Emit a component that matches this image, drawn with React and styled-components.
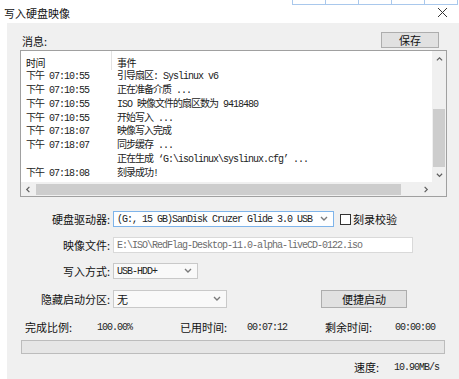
import styled, { createGlobalStyle } from "styled-components";

const GlobalStyle = createGlobalStyle`
  html, body {
    margin: 0;
    padding: 0;
    background: #fff;
  }
  body {
    font-family: "Noto Sans CJK SC", "Noto Sans", sans-serif;
    color: #111;
  }
`;

const logRows = [
  ["下午 07:10:55", "引导扇区: Syslinux v6"],
  ["下午 07:10:55", "正在准备介质 ..."],
  ["下午 07:10:55", "ISO 映像文件的扇区数为 9418480"],
  ["下午 07:10:55", "开始写入 ..."],
  ["下午 07:18:07", "映像写入完成"],
  ["下午 07:18:07", "同步缓存 ..."],
  ["", "正在生成 ‘G:\\isolinux\\syslinux.cfg’ ..."],
  ["下午 07:18:08", "刻录成功!"],
];

const Chevron = ({ dir = "down", color = "#606060", size = 7 }) => {
  const paths = {
    down: "M1 2 L4 5 L7 2",
    up: "M1 5 L4 2 L7 5",
    left: "M5 1 L2 4 L5 7",
    right: "M3 1 L6 4 L3 7",
  };
  return (
    <svg width={size} height={size} viewBox="0 0 8 8">
      <path d={paths[dir]} fill="none" stroke={color} strokeWidth="1.4" />
    </svg>
  );
};

const App = () => {
  return (
    <>
      <GlobalStyle />
      <Window>
        <TabStrip>
          {[0, 1, 2, 3, 4].map((i) => (
            <TabCell key={i} />
          ))}
        </TabStrip>
        <TitleBar>
          <Title>写入硬盘映像</Title>
          <svg width="11" height="11" viewBox="0 0 11 11">
            <path d="M1 1 L10 10 M10 1 L1 10" stroke="#333" strokeWidth="1" />
          </svg>
        </TitleBar>
        <Body>
          <TopRow>
            <Caption>消息:</Caption>
            <Button $width={58} $height={16}>保存</Button>
          </TopRow>
          <ListBox>
            <ListContent>
              <HeaderRow>
                <HeaderCell $divider>时间</HeaderCell>
                <HeaderCell>事件</HeaderCell>
              </HeaderRow>
              {logRows.map(([time, event], i) => (
                <LogRow key={i}>
                  <LogCell>{time}</LogCell>
                  <LogCell>{event}</LogCell>
                </LogRow>
              ))}
            </ListContent>
            <VScroll>
              <ArrowBox $h={17}>
                <Chevron dir="up" />
              </ArrowBox>
              <VThumb $offset={41} $size={58} />
              <Spacer />
              <ArrowBox $h={14}>
                <Chevron dir="down" />
              </ArrowBox>
            </VScroll>
            <HScroll>
              <ArrowBox $w={15}>
                <Chevron dir="left" />
              </ArrowBox>
              <HThumb $size={365} />
              <Spacer />
              <ArrowBox $w={14}>
                <Chevron dir="right" />
              </ArrowBox>
            </HScroll>
            <Corner />
          </ListBox>

          <FormRow $gap={14}>
            <Label>硬盘驱动器:</Label>
            <Combo $width={221} $focus>
              <ComboText>(G:, 15 GB)SanDisk Cruzer Glide 3.0 USB</ComboText>
              <Chevron dir="down" color="#7a7a7a" size={8} />
            </Combo>
            <Check />
            <CheckLabel>刻录校验</CheckLabel>
          </FormRow>

          <FormRow $gap={10}>
            <Label>映像文件:</Label>
            <TextField>E:\ISO\RedFlag-Desktop-11.0-alpha-liveCD-0122.iso</TextField>
          </FormRow>

          <FormRow $gap={10}>
            <Label>写入方式:</Label>
            <Combo $width={85}>
              <ComboText>USB-HDD+</ComboText>
              <Chevron dir="down" color="#7a7a7a" size={8} />
            </Combo>
          </FormRow>

          <FormRow $gap={11} $height={18}>
            <Label>隐藏启动分区:</Label>
            <Combo $width={114}>
              <ComboCjk>无</ComboCjk>
              <Chevron dir="down" color="#7a7a7a" size={8} />
            </Combo>
            <Button $width={86} $height={18} $left={94}>
              便捷启动
            </Button>
          </FormRow>

          <Stats>
            <StatLabel>完成比例:</StatLabel>
            <StatValue>100.00%</StatValue>
            <StatLabel>已用时间:</StatLabel>
            <StatValue>00:07:12</StatValue>
            <StatLabel>剩余时间:</StatLabel>
            <StatValue>00:00:00</StatValue>
          </Stats>

          <Progress />

          <SpeedRow>
            <StatLabel>速度:</StatLabel>
            <StatValue>10.90MB/s</StatValue>
          </SpeedRow>
        </Body>
      </Window>
    </>
  );
};

const Window = styled.div`
  position: relative;
  width: 459px;
  height: 379px;
  display: flex;
  flex-direction: column;
  background: #fff;
  overflow: hidden;
`;

const TabStrip = styled.div`
  position: absolute;
  top: -1px;
  left: 292px;
  display: flex;
`;

const TabCell = styled.div`
  width: 32px;
  height: 4px;
  border: 1px solid #a9c8ec;
  border-left-width: ${(p) => (p.first ? 1 : 0)}px;
  &:first-child {
    border-left-width: 1px;
  }
`;

const TitleBar = styled.div`
  height: 23px;
  flex-shrink: 0;
  display: flex;
  align-items: center;
  justify-content: space-between;
  padding: 2px 11px 0 4px;
  box-sizing: border-box;
`;

const Title = styled.span`
  font-size: 11px;
  color: #111;
`;

const Body = styled.div`
  flex: 1;
  margin-left: 7px;
  background: #f0f0f0;
  display: flex;
  flex-direction: column;
`;

const TopRow = styled.div`
  display: flex;
  justify-content: space-between;
  align-items: flex-end;
  padding: 9px 20px 0 15px;
`;

const Caption = styled.span`
  font-size: 11px;
  line-height: 14px;
`;

const Button = styled.div`
  width: ${(p) => p.$width}px;
  height: ${(p) => p.$height}px;
  margin-left: ${(p) => p.$left || 0}px;
  box-sizing: border-box;
  background: #e1e1e1;
  border: 1px solid #adadad;
  display: flex;
  align-items: center;
  justify-content: center;
  font-size: 11px;
  color: #111;
`;

const ListBox = styled.div`
  margin: 2px 12px 0 13px;
  height: 147px;
  box-sizing: border-box;
  border: 1px solid #a0a0a0;
  background: #fff;
  display: grid;
  grid-template-columns: 1fr 14px;
  grid-template-rows: 1fr 14px;
  overflow: hidden;
`;

const ListContent = styled.div`
  overflow: hidden;
  font-family: "Liberation Mono", "Noto Sans CJK SC", monospace;
  font-size: 10px;
  letter-spacing: -1px;
  color: #222;
`;

const HeaderRow = styled.div`
  display: grid;
  grid-template-columns: 91px 1fr;
  height: 19px;
`;

const HeaderCell = styled.div`
  padding: 5px 0 0 5px;
  font-family: "Noto Sans CJK SC", sans-serif;
  font-size: 10px;
  line-height: 13px;
  letter-spacing: -0.5px;
  color: #111;
  border-right: ${(p) => (p.$divider ? "1px solid #e3e3e3" : "none")};
`;

const LogRow = styled.div`
  display: grid;
  grid-template-columns: 91px 1fr;
  height: 13.75px;
  align-items: center;
`;

const LogCell = styled.div`
  padding-left: 5px;
  white-space: pre;
  line-height: 13px;
`;

const VScroll = styled.div`
  background: #f0f0f0;
  display: flex;
  flex-direction: column;
  align-items: center;
`;

const HScroll = styled.div`
  background: #f0f0f0;
  display: flex;
  align-items: center;
`;

const Corner = styled.div`
  background: #f0f0f0;
`;

const ArrowBox = styled.div`
  width: ${(p) => (p.$w ? `${p.$w}px` : "100%")};
  height: ${(p) => (p.$h ? `${p.$h}px` : "100%")};
  flex-shrink: 0;
  display: flex;
  align-items: center;
  justify-content: center;
`;

const VThumb = styled.div`
  width: 12px;
  height: ${(p) => p.$size}px;
  margin-top: ${(p) => p.$offset}px;
  background: #cdcdcd;
`;

const HThumb = styled.div`
  width: ${(p) => p.$size}px;
  height: 11px;
  background: #cdcdcd;
`;

const Spacer = styled.div`
  flex: 1;
`;

const FormRow = styled.div`
  display: flex;
  align-items: center;
  height: ${(p) => p.$height || 16}px;
  margin-top: ${(p) => p.$gap}px;
`;

const Label = styled.div`
  width: 106px;
  padding-right: 3px;
  box-sizing: border-box;
  text-align: right;
  font-size: 11px;
  color: #111;
`;

const Combo = styled.div`
  width: ${(p) => p.$width}px;
  height: 100%;
  box-sizing: border-box;
  border: 1px solid ${(p) => (p.$focus ? "#7eb4ea" : "#c9c9c9")};
  background: ${(p) => (p.$focus ? "#fdfeff" : "#f9f9f9")};
  display: flex;
  align-items: center;
  justify-content: space-between;
  padding: 0 5px 0 3px;
`;

const ComboText = styled.span`
  font-family: "Liberation Mono", monospace;
  font-size: 10px;
  letter-spacing: -1px;
  color: #222;
  white-space: pre;
`;

const ComboCjk = styled.span`
  font-size: 11px;
  color: #111;
`;

const Check = styled.div`
  width: 11px;
  height: 11px;
  box-sizing: border-box;
  border: 1px solid #333;
  background: #fff;
  margin-left: 6px;
`;

const CheckLabel = styled.span`
  margin-left: 2px;
  font-size: 11px;
  color: #111;
`;

const TextField = styled.div`
  width: 300px;
  height: 100%;
  box-sizing: border-box;
  border: 1px solid #d9d9d9;
  background: #fff;
  padding-left: 3px;
  display: flex;
  align-items: center;
  font-family: "Liberation Mono", monospace;
  font-size: 10px;
  letter-spacing: -1px;
  color: #6d6d6d;
  white-space: pre;
`;

const Stats = styled.div`
  display: grid;
  grid-template-columns: 72px 83px 67px 78px 70px 1fr;
  align-items: center;
  padding-left: 18px;
  margin-top: 11px;
  height: 14px;
`;

const StatLabel = styled.span`
  font-size: 11px;
  color: #111;
  white-space: nowrap;
`;

const StatValue = styled.span`
  font-family: "Liberation Mono", monospace;
  font-size: 10px;
  letter-spacing: -1px;
  color: #222;
  white-space: pre;
`;

const Progress = styled.div`
  margin: 7px 14px 0 14px;
  height: 14px;
  box-sizing: border-box;
  border: 1px solid #bcbcbc;
  background: #e6e6e6;
`;

const SpeedRow = styled.div`
  display: flex;
  justify-content: flex-end;
  align-items: center;
  gap: 15px;
  padding-right: 20px;
  margin-top: 6px;
  height: 14px;
`;

export default App;
